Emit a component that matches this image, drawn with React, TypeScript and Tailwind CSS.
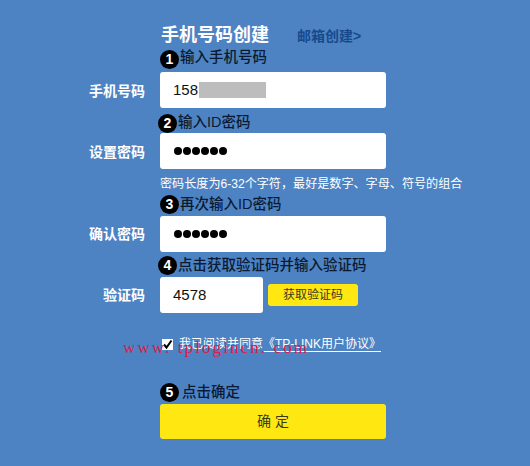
const cjk = "font-['Liberation_Sans','Noto_Sans_CJK_SC',sans-serif]";

function Step({ n, text, className, textClass }: { n: number; text: string; className: string; textClass?: string }) {
  return (
    <div className={`flex h-full items-end ml-[160px] ${className}`}>
      <div className="flex items-center">
        <span className="flex h-[19px] w-[19px] shrink-0 items-center justify-center rounded-full bg-black text-[14px] font-bold text-white mr-px">
          {n}
        </span>
        <span className={`text-[14.5px] font-medium leading-[19px] text-[#0b1a33] ${textClass ?? ""}`}>{text}</span>
      </div>
    </div>
  );
}

function Label({ text, className }: { text: string; className?: string }) {
  return <div className={`w-[146px] shrink-0 pr-px text-right text-[14px] font-bold text-white ${className ?? ""}`}>{text}</div>;
}

function Dots() {
  return (
    <span className="flex gap-[1px] pl-[14px]">
      {[0, 1, 2, 3, 4, 5].map((i) => (
        <span key={i} className="h-[8px] w-[8px] rounded-full bg-black" />
      ))}
    </span>
  );
}

export default function App() {
  return (
    <div className={`relative h-[466px] w-[530px] overflow-hidden bg-[#4d83c3] ${cjk}`}>
      <div className="flex h-[48px] items-end pl-[161px]">
        <h1 className="w-[136px] text-[18px] font-bold leading-[26px] text-white">手机号码创建</h1>
        <a className="text-[14px] font-bold leading-[24px] text-[#174a8c]">邮箱创建&gt;</a>
      </div>

      <div className="h-[24px]">
        <Step n={1} text="输入手机号码" className="pb-[3px]" textClass="-translate-y-[2px]" />
      </div>
      <div className="flex h-[36px] items-center">
        <Label text="手机号码" className="pt-[2px]" />
        <div className="ml-[14px] flex h-full w-[226px] items-center rounded-[3px] bg-white pl-[13px] text-[15px] text-[#111]">
          158
          <span className="ml-px h-[16px] w-[67px] bg-[#bdbdbd]" />
        </div>
      </div>

      <div className="h-[25px]">
        <Step n={2} text="输入ID密码" className="-translate-x-[2px]" textClass="-translate-y-px" />
      </div>
      <div className="flex h-[36px] items-center">
        <Label text="设置密码" className="pt-[2px]" />
        <div className="ml-[14px] flex h-full w-[226px] items-center rounded-[3px] bg-white">
          <Dots />
        </div>
      </div>

      <div className="flex h-[25px] items-end pl-[160px] text-[12.1px] leading-[20px] whitespace-nowrap text-white">
        密码长度为6-32个字符，最好是数字、字母、符号的组合
      </div>

      <div className="h-[22px]">
        <Step n={3} text="再次输入ID密码" className="pb-[2px]" />
      </div>
      <div className="flex h-[36px] items-center">
        <Label text="确认密码" />
        <div className="ml-[14px] flex h-full w-[226px] items-center rounded-[3px] bg-white">
          <Dots />
        </div>
      </div>

      <div className="h-[25px]">
        <Step n={4} text="点击获取验证码并输入验证码" className="-translate-x-[2px] pb-[2px]" />
      </div>
      <div className="flex h-[36px] items-center">
        <Label text="验证码" />
        <div className="ml-[14px] flex h-full w-[103px] items-center rounded-[3px] bg-white pl-[13px] text-[15px] text-[#111]">
          4578
        </div>
        <button className="ml-[5px] h-[22px] w-[90px] rounded-[3px] bg-[#ffe812] text-[12px] text-[#3a3a1a]">
          获取验证码
        </button>
      </div>

      <div className="mt-[23px] ml-[162px] flex h-[16px] items-center">
        <span className="flex h-[11px] w-[11px] items-center justify-center bg-white">
          <svg viewBox="0 0 11 11" className="h-[11px] w-[11px]">
            <path d="M2 5.5 L4.5 8.5 L9.5 1.5" fill="none" stroke="#000" strokeWidth="2" />
          </svg>
        </span>
        <span className="ml-[6px] text-[12px] leading-[14px] whitespace-nowrap text-white">
          我已阅读并同意<span className="border-b border-white">《TP-LINK用户协议》</span>
        </span>
      </div>

      <div className="mt-[28px] h-[24px]">
        <Step n={5} text="点击确定" className="pb-[2px]" textClass="ml-[2px]" />
      </div>
      <div className="ml-[160px] flex h-[35px] w-[226px] items-center justify-center rounded-[3px] bg-[#ffe812] text-[14px] text-[#3a3a1a]">
        确 定
      </div>

      <div className="absolute left-[123px] top-[338px] font-['Liberation_Serif',serif] text-[17px] leading-[20px] tracking-[2.1px] whitespace-nowrap text-[#d81e4a]">
        www. tplogincn. com
      </div>
    </div>
  );
}
